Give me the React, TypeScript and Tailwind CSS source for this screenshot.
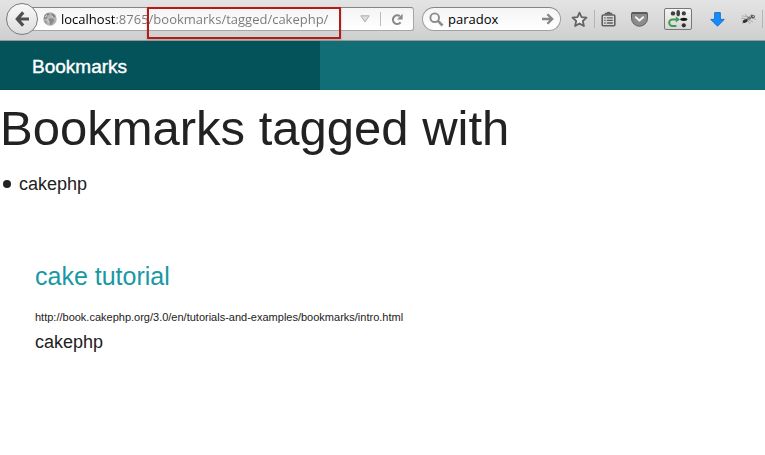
import React from "react";

function BackIcon() {
  return (
    <svg width="14" height="16" viewBox="0 0 14 16" fill="none" stroke="#4f4f4f" strokeWidth="3.2" aria-hidden="true">
      <path d="M8.2 1.4 2.3 8l5.9 6.6M2.5 8H14" strokeLinejoin="miter" />
    </svg>
  );
}

function GlobeIcon() {
  return (
    <svg width="14" height="14" viewBox="0 0 14 14" className="shrink-0" aria-hidden="true">
      <circle cx="7" cy="7" r="6.7" fill="#b4b4b4" />
      <path
        d="M1.6 3.2 4.4 1l2.4.4-.6 1.7-2 1 .2 1.6-2 1.2L.6 6.4zM8.2 1.2l2.6.8 1.8 2.2-1 1.6-2.2-.4-1-1.8zM6.4 6.4l3.4.2 1.6 1.8-1.6 2-1 2.6-1.8-.4-.2-2.8-1.6-1.6zM1.4 8.4l1.8 1 .6 2.4-1.4-1z"
        fill="#8a8a8a"
      />
      <path d="M2 4.8 4 3.4M8.6 3.6l1.6 2.2M4.2 7.4l1.8 2.8" stroke="#e4e4e4" strokeWidth="1" />
    </svg>
  );
}

function ReloadIcon() {
  return (
    <svg width="12" height="13" viewBox="0 0 12 13" fill="none" aria-hidden="true">
      <path d="M8.8 3.2A4.3 4.3 0 1 0 9.6 9.4" stroke="#898989" strokeWidth="2.2" />
      <path d="M11.6.8v5.6H6z" fill="#898989" />
    </svg>
  );
}

function SearchIcon() {
  return (
    <svg width="15" height="15" viewBox="0 0 15 15" fill="none" stroke="#8b8b8b" className="shrink-0" aria-hidden="true">
      <circle cx="5.7" cy="5.7" r="4.3" strokeWidth="1.9" />
      <path d="m8.9 8.9 4.6 4.6" strokeWidth="2.6" />
    </svg>
  );
}

function GoIcon() {
  return (
    <svg width="12" height="12" viewBox="0 0 12 12" fill="none" stroke="#858585" strokeWidth="2.3" aria-hidden="true">
      <path d="M0 6h10M5.4 1.2 10.2 6l-4.8 4.8" />
    </svg>
  );
}

function StarIcon() {
  return (
    <svg width="17" height="17" viewBox="0 0 17 17" fill="#ededed" stroke="#646464" strokeWidth="1.8" strokeLinejoin="round" aria-hidden="true">
      <path d="m8.5 1.6 2 4.5 5 .5-3.7 3.4 1.1 5-4.4-2.6L4.1 15l1.1-5-3.7-3.4 5-.5z" />
    </svg>
  );
}

function ClipboardIcon() {
  return (
    <svg width="15" height="16" viewBox="0 0 15 16" fill="none" stroke="#606060" strokeWidth="1.6" aria-hidden="true">
      <rect x="1.2" y="4" width="12.6" height="10.8" rx="1" />
      <path d="M4.6 3.6V2.5h1.5a1.5 1.5 0 0 1 2.8 0h1.5v1.1" fill="#606060" />
      <path d="M3.2 6.8h1.5M5.8 6.8h6M3.2 9.4h1.5M5.8 9.4h6M3.2 12h1.5M5.8 12h6" strokeWidth="1.3" />
    </svg>
  );
}

function PocketIcon() {
  return (
    <svg width="17" height="15" viewBox="0 0 17 15" aria-hidden="true">
      <path d="M1.2.6h14.6c.5 0 .7.3.7.7v4.9a8 8 0 0 1-16 0V1.3c0-.4.3-.7.7-.7z" fill="#8c8c8c" stroke="#5c5c5c" strokeWidth="1" />
      <path d="M1 1.2h15" stroke="#505050" strokeWidth="1.2" />
      <path d="m4.8 5.2 3.7 3.4 3.7-3.4" fill="none" stroke="#f2f2f2" strokeWidth="2" strokeLinecap="round" strokeLinejoin="round" />
    </svg>
  );
}

function PawIcon() {
  return (
    <svg width="20" height="18" viewBox="0 0 20 18" aria-hidden="true">
      <g fill="#414141">
        <circle cx="5" cy="3.4" r="2.2" />
        <ellipse cx="10.2" cy="3.2" rx="1.8" ry="3.1" />
        <circle cx="15.8" cy="3.4" r="2.1" />
      </g>
      <ellipse cx="15.8" cy="9.3" rx="3.6" ry="1.6" fill="#151515" />
      <circle cx="15.8" cy="15.3" r="2.1" fill="#303030" />
      <path d="M9.6 9.6H4.4a3.2 3.2 0 0 0 0 6.4h4" fill="none" stroke="#3f9d4b" strokeWidth="2" />
      <path d="m7.8 6.4 4.2 3.2-4.2 2.9z" fill="#3f9d4b" />
    </svg>
  );
}

function DownloadIcon() {
  return (
    <svg width="15" height="15" viewBox="0 0 15 15" aria-hidden="true">
      <path d="M4.7.6h5.6v6.8h3.9l-6.7 6.8L.8 7.4h3.9z" fill="#168cfb" stroke="#1272d3" strokeWidth="1" />
    </svg>
  );
}

function BugIcon() {
  return (
    <svg width="16" height="14" viewBox="0 0 16 14" fill="none" stroke="#a0a0a0" strokeWidth=".8" aria-hidden="true">
      <path d="M1 3.8 8 5l3-3M0 6l6 1 3 5M1 12l5-5 6 3M11 6l4 1.5M4 2l5 5" />
      <ellipse cx="4.2" cy="9" rx="2.8" ry="1.6" fill="#333" stroke="none" transform="rotate(-25 4.2 9)" />
      <ellipse cx="8.2" cy="6.3" rx="2.2" ry="1.4" fill="#777" stroke="none" />
      <ellipse cx="11.8" cy="4.6" rx="2.2" ry="1.8" fill="#555" stroke="none" />
      <circle cx="12.2" cy="4.2" r=".8" fill="#ddd" stroke="none" />
    </svg>
  );
}

function BrowserToolbar() {
  return (
    <header className="flex h-[41px] items-center border-b border-[#999] bg-linear-to-b from-[#e4e4e4] to-[#cfcfcf] pb-0.5 pl-1.5 font-['Open_Sans','Noto_Sans',sans-serif] text-[13px]">
      <button
        aria-label="Back"
        className="z-10 flex size-8 shrink-0 items-center justify-center rounded-full border border-[#7b7b7b] bg-linear-to-b from-[#f8f8f8] to-[#dedede]"
      >
        <BackIcon />
      </button>
      <div className="relative -ml-2 flex h-6 flex-1 items-center rounded-r-[3px] border border-[#a6a6a6] border-t-[#858585] bg-linear-to-b from-[#f4f4f4] to-white pl-3">
        <GlobeIcon />
        <input
          type="text"
          aria-label="Address"
          defaultValue="localhost:8765/bookmarks/tagged/cakephp/"
          className="ml-1 h-5 min-w-0 flex-1 bg-[linear-gradient(to_right,#000_54px,#777_54px)] bg-clip-text text-transparent outline-none"
        />
        <button aria-label="Show history" className="px-2.5">
          <svg width="10" height="8" viewBox="0 0 10 8" aria-hidden="true">
            <path d="M.8.8h8.4L5 7z" fill="#ddd" stroke="#adadad" />
          </svg>
        </button>
        <span className="mr-2.5 h-3.5 w-px bg-[#bbb]" />
        <button aria-label="Reload" className="mr-2.5">
          <ReloadIcon />
        </button>
        <span className="pointer-events-none absolute -top-px left-[116px] h-8 w-[194px] border-2 border-[#b51a14] shadow-[0_1px_2px_#8888]" />
      </div>
      <div className="ml-2 flex h-6 w-[139px] shrink-0 items-center rounded-full border border-[#a0a0a0] border-t-[#858585] bg-linear-to-b from-[#f4f4f4] to-white px-1.5">
        <SearchIcon />
        <input
          type="text"
          aria-label="Search"
          defaultValue="paradox"
          className="ml-1 h-5 min-w-0 flex-1 text-black outline-none"
        />
        <button aria-label="Go">
          <GoIcon />
        </button>
      </div>
      <div className="flex shrink-0 items-center pl-2.5">
        <button aria-label="Bookmark this page"><StarIcon /></button>
        <span className="mx-1.5 h-[18px] w-px bg-[#b5b5b5]" />
        <button aria-label="Bookmarks list"><ClipboardIcon /></button>
        <button aria-label="Pocket" className="ml-[15px]"><PocketIcon /></button>
        <button
          aria-label="Session tools"
          className="ml-4 flex h-[22px] w-7 items-center justify-center rounded-[2px] border border-[#777] bg-linear-to-b from-[#f5f5f5] to-[#d6d6d6]"
        >
          <PawIcon />
        </button>
        <button aria-label="Downloads" className="ml-[18px]"><DownloadIcon /></button>
        <button aria-label="Debugger" className="ml-4"><BugIcon /></button>
        <span className="mr-0.5 ml-[5px] h-[18px] w-px bg-[#b5b5b5]" />
      </div>
    </header>
  );
}

export default function App() {
  return (
    <div className="min-h-screen bg-white font-['Liberation_Sans',Arial,sans-serif] text-[#222]">
      <BrowserToolbar />
      <nav className="flex h-[49px] bg-[#116d76]">
        <div className="flex w-80 items-center border-b border-[#044b52] bg-[#04535a] pt-1 pl-8">
          <a href="#bookmarks" className="text-[19px] text-white [-webkit-text-stroke:0.4px_white]">Bookmarks</a>
        </div>
      </nav>
      <main>
        <h1 className="mt-2 text-[49px] leading-[60px]">Bookmarks tagged with</h1>
        <ul className="mt-3 pl-[3px] text-[18px] leading-7">
          <li className="flex items-center gap-2 before:size-2 before:rounded-full before:bg-[#222]">cakephp</li>
        </ul>
        <article className="mt-[60px] px-[35px]">
          <h4 className="text-[25px] leading-9 text-[#1798a5]">
            <a href="#cake-tutorial">cake tutorial</a>
          </h4>
          <small className="mt-3 block text-[11px] leading-[22px]">
            http://book.cakephp.org/3.0/en/tutorials-and-examples/bookmarks/intro.html
          </small>
          <p className="text-[18px] leading-7">cakephp</p>
        </article>
      </main>
    </div>
  );
}
